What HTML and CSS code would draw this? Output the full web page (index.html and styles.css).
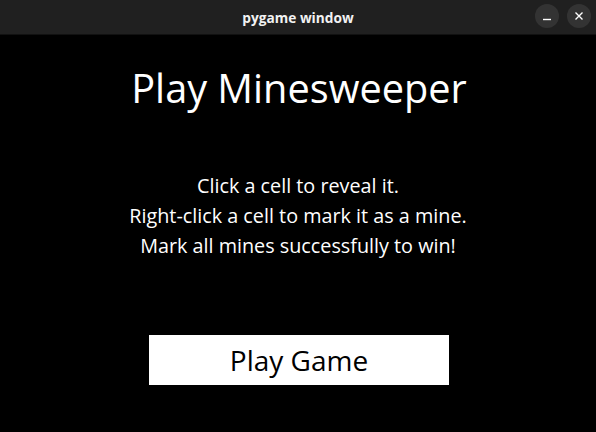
FILE: index.html
```html
<!DOCTYPE html>
<html>
<head>
<meta charset="utf-8">
<link rel="stylesheet" href="styles.css">
</head>
<body>
<div class="window">
  <header class="titlebar">
    <span class="title">pygame window</span>
    <div class="controls">
      <button class="ctl"><svg width="10" height="10" viewBox="0 0 10 10"><path d="M1 8.5h8" stroke="#fff" stroke-width="1.4"/></svg></button>
      <button class="ctl"><svg width="10" height="10" viewBox="0 0 10 10"><path d="M1.5 1.5l7 7M8.5 1.5l-7 7" stroke="#fff" stroke-width="1.4"/></svg></button>
    </div>
  </header>
  <main class="content">
    <h1 class="heading">Play Minesweeper</h1>
    <div class="instructions">
      <p>Click a cell to reveal it.</p>
      <p>Right-click a cell to mark it as a mine.</p>
      <p>Mark all mines successfully to win!</p>
    </div>
    <button class="play">Play Game</button>
  </main>
</div>
</body>
</html>
```
FILE: styles.css
```css
html, body {
  margin: 0;
  padding: 0;
  background: #000;
}
.window {
  width: 596px;
  height: 432px;
  display: flex;
  flex-direction: column;
  background: #000;
  overflow: hidden;
}
.titlebar {
  position: relative;
  height: 34px;
  background: #202020;
  border-bottom: 1px solid #111;
  display: flex;
  align-items: center;
  justify-content: center;
  flex-shrink: 0;
}
.title {
  color: #f2f2f2;
  font-family: "Open Sans", "DejaVu Sans", sans-serif;
  font-weight: 700;
  font-size: 13.7px;
}
.controls {
  position: absolute;
  right: 5px;
  top: 4px;
  display: flex;
  gap: 8px;
}
.ctl {
  width: 24px;
  height: 24px;
  border-radius: 50%;
  border: none;
  padding: 0;
  background: #333333;
  display: flex;
  align-items: center;
  justify-content: center;
}
.content {
  flex: 1;
  display: flex;
  flex-direction: column;
  align-items: center;
  font-family: "Open Sans", sans-serif;
  color: #fff;
}
.heading {
  margin: 28px 0 0 2px;
  font-weight: 400;
  font-size: 39.7px;
  line-height: 50px;
}
.instructions {
  margin-top: 58px;
  text-align: center;
  font-size: 19.8px;
  line-height: 30px;
}
.instructions p {
  margin: 0;
}
.play {
  margin: 74px 0 0 2px;
  width: 300px;
  height: 50px;
  background: #fff;
  border: none;
  color: #000;
  font-family: "Open Sans", sans-serif;
  font-size: 28px;
  padding: 0;
}
```
